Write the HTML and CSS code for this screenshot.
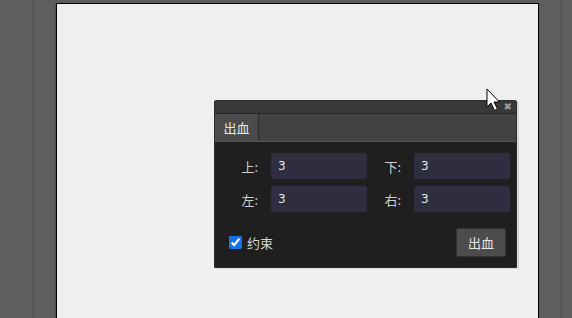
FILE: index.html
```html
<!DOCTYPE html>
<html lang="zh">
<head>
  <meta charset="UTF-8">
  <title>出血</title>
  <link rel="stylesheet" href="styles.css">
</head>
<body>
  <div class="workspace">
    <div class="guide guide-left"></div>
    <div class="canvas">
      <!-- Bleed dialog -->
      <div class="panel">
        <div class="titlebar"><span class="close">&#x2716;</span></div>
        <div class="tabs"><span class="tab">出血</span></div>
        <div class="body">
          <div class="grid">
            <label>上:</label><input type="text" value="3">
            <label>下:</label><input type="text" value="3">
            <label>左:</label><input type="text" value="3">
            <label>右:</label><input type="text" value="3">
          </div>
          <div class="footer">
            <label class="check"><input type="checkbox" checked> 约束</label>
            <button>出血</button>
          </div>
        </div>
      </div>
      <svg class="cursor" width="15" height="25" viewBox="0 0 15 25">
        <path d="M1 1 L1 19 L5 15 L8.5 22.5 L11.5 21 L8 14 L13.5 14 Z" fill="#fff" stroke="#000" stroke-width="1"/>
      </svg>
    </div>
    <div class="guide guide-right"></div>
  </div>
</body>
</html>
```
FILE: styles.css
```css
* {
  box-sizing: border-box;
}

body {
  margin: 0;
  background: #5e5e5e;
  font-family: "Noto Sans CJK SC", "Noto Sans", sans-serif;
  font-size: 13px;
  overflow: hidden;
}

.workspace {
  position: relative;
  height: 318px;
  padding: 3px 0 0 56px;
}

.guide {
  position: absolute;
  top: 0;
  width: 1px;
  height: 318px;
  background: #d01818;
}

.guide-left { left: 33px; }
.guide-right { left: 561px; }

.canvas {
  position: relative;
  width: 483px;
  height: 330px;
  background: #efefef;
  border: 1px solid #000;
  box-shadow: -1px 0 0 #4e4e4e;
  padding: 96px 0 0 157px;
}

.panel {
  width: 303px;
  background: #1f1f1f;
  border: 1px solid #2e2e2e;
  box-shadow: 2px 1px 0 #d8d8d8;
  border-radius: 2px 2px 0 0;
}

.titlebar {
  height: 13px;
  background: #383838;
  border-bottom: 1px solid #262626;
  display: flex;
  justify-content: flex-end;
  align-items: center;
  padding-right: 4px;
}

.close {
  color: #9a9a9a;
  font-size: 10px;
  line-height: 1;
  font-family: "DejaVu Sans", sans-serif;
}

.tabs {
  height: 28px;
  background: #424242;
  border-bottom: 1px solid #565656;
  display: flex;
}

.tab {
  width: 44px;
  background: #4b4b4b;
  border-right: 1px solid #2c2c2c;
  color: #e8e8e8;
  display: flex;
  align-items: center;
  justify-content: center;
}

.body {
  padding: 11px 5px 10px 14px;
}

.grid {
  display: grid;
  grid-template-columns: 42px 96px 47px 96px;
  row-gap: 7px;
  align-items: center;
}

.grid label {
  color: #cfcfcf;
  text-align: right;
  padding-right: 13px;
}

.grid input {
  height: 26px;
  width: 96px;
  border: none;
  border-radius: 2px;
  background: #2f2e40;
  color: #e6e6e6;
  font-family: "DejaVu Sans", sans-serif;
  font-size: 12px;
  padding: 0 7px;
}

.footer {
  margin-top: 16px;
  display: flex;
  justify-content: space-between;
  align-items: center;
  padding-right: 5px;
}

.check {
  color: #d6d6d6;
  display: flex;
  align-items: center;
  gap: 5px;
}

.check input {
  margin: 0;
  width: 13px;
  height: 13px;
  accent-color: #1473e6;
}

button {
  width: 50px;
  height: 29px;
  background: #4c4c4c;
  border: 1px solid #333;
  border-radius: 2px;
  color: #e8e8e8;
  font-family: inherit;
  font-size: 13px;
}

.cursor {
  position: absolute;
  left: 429px;
  top: 84px;
}
```
